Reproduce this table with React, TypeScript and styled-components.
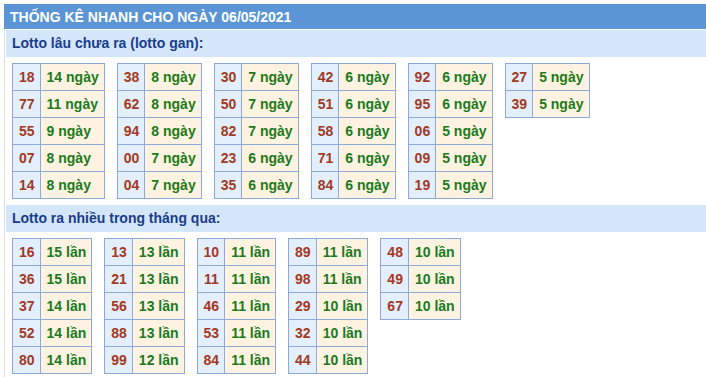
import React from "react";
import styled, { createGlobalStyle } from "styled-components";

const GlobalStyle = createGlobalStyle`
  html, body {
    margin: 0;
    padding: 0;
    background: #ffffff;
    overflow: hidden;
  }
  body {
    font-family: "Liberation Sans", Arial, sans-serif;
  }
`;

type Item = [string, number];

const ganColumns: Item[][] = [
  [["18", 14], ["77", 11], ["55", 9], ["07", 8], ["14", 8]],
  [["38", 8], ["62", 8], ["94", 8], ["00", 7], ["04", 7]],
  [["30", 7], ["50", 7], ["82", 7], ["23", 6], ["35", 6]],
  [["42", 6], ["51", 6], ["58", 6], ["71", 6], ["84", 6]],
  [["92", 6], ["95", 6], ["06", 5], ["09", 5], ["19", 5]],
  [["27", 5], ["39", 5]],
];

const nhieuColumns: Item[][] = [
  [["16", 15], ["36", 15], ["37", 14], ["52", 14], ["80", 14]],
  [["13", 13], ["21", 13], ["56", 13], ["88", 13], ["99", 12]],
  [["10", 11], ["11", 11], ["46", 11], ["53", 11], ["84", 11]],
  [["89", 11], ["98", 11], ["29", 10], ["32", 10], ["44", 10]],
  [["48", 10], ["49", 10], ["67", 10]],
];

function StatTable({ rows, unit }: { rows: Item[]; unit: string }) {
  return (
    <Table>
      <tbody>
        {rows.map(([num, count]) => (
          <tr key={num}>
            <NumCell>{num}</NumCell>
            <CountCell>
              {count} {unit}
            </CountCell>
          </tr>
        ))}
      </tbody>
    </Table>
  );
}

export default function App() {
  return (
    <Page>
      <GlobalStyle />
      <Box>
        <Header>THỐNG KÊ NHANH CHO NGÀY 06/05/2021</Header>
        <Body>
          <SubHeader>Lotto lâu chưa ra (lotto gan):</SubHeader>
          <TableRow>
            {ganColumns.map((rows, i) => (
              <StatTable key={i} rows={rows} unit="ngày" />
            ))}
          </TableRow>
          <SubHeader>Lotto ra nhiều trong tháng qua:</SubHeader>
          <TableRow>
            {nhieuColumns.map((rows, i) => (
              <StatTable key={i} rows={rows} unit="lần" />
            ))}
          </TableRow>
        </Body>
      </Box>
    </Page>
  );
}

const Page = styled.div`
  padding: 4px 0 0 4px;
  width: 702px;
  height: 373px;
  overflow: hidden;
`;

const Box = styled.div`
  width: 740px;
`;

const Header = styled.div`
  height: 25px;
  line-height: 26px;
  padding-left: 6px;
  background: #5b95d5;
  color: #ffffff;
  font-size: 14px;
  font-weight: bold;
`;

const Body = styled.div`
  border-left: 1px solid #dedede;
  padding: 1px 0 0 1px;
  height: 400px;
`;

const SubHeader = styled.div`
  height: 27px;
  line-height: 27px;
  padding-left: 6px;
  background: #d4e6f9;
  color: #1a3c8c;
  font-size: 14px;
  font-weight: bold;
`;

const TableRow = styled.div`
  display: flex;
  align-items: flex-start;
  gap: 12px;
  padding: 6px 0 6px 6px;
`;

const Table = styled.table`
  border-collapse: collapse;
  font-size: 14px;
  font-weight: bold;

  td {
    border: 1px solid #8eaadb;
    height: 26px;
    padding: 0 5px 0 6px;
    white-space: nowrap;
  }
`;

const NumCell = styled.td`
  background: #e3effc;
  color: #a13a23;
  text-align: center;
`;

const CountCell = styled.td`
  background: #fef3e1;
  color: #1c7a1c;
  text-align: left;
`;
